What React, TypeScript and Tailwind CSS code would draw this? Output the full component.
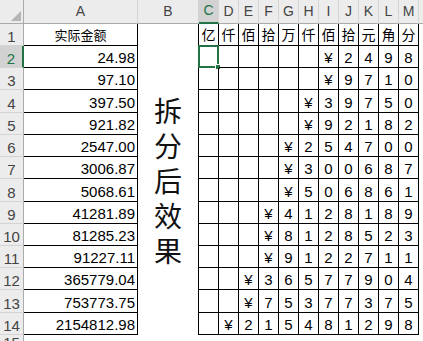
import React from "react";

const amounts = [
  "24.98",
  "97.10",
  "397.50",
  "921.82",
  "2547.00",
  "3006.87",
  "5068.61",
  "41281.89",
  "81285.23",
  "91227.11",
  "365779.04",
  "753773.75",
  "2154812.98",
];

const units = ["亿", "仟", "佰", "拾", "万", "仟", "佰", "拾", "元", "角", "分"];
const letters = ["C", "D", "E", "F", "G", "H", "I", "J", "K", "L", "M"];

const num = "font-['Liberation_Sans_Narrow','Liberation_Sans',sans-serif]";
const cjk = "font-['Noto_Sans_CJK_SC','Noto_Sans',sans-serif]";

// spread an amount over the 11 unit columns, yen sign in front
function splitAmount(v: string) {
  const digits = v.replace(".", "").split("");
  const cells: string[] = Array(11).fill("");
  const start = 11 - digits.length;
  digits.forEach((d, i) => (cells[start + i] = d));
  if (start > 0) cells[start - 1] = "¥";
  return cells;
}

function ColHeader({ label, active }: { label: string; active?: boolean }) {
  return (
    <div
      className={`flex items-end justify-center pb-[1px] text-[14px] ${num} border-r border-r-[#d4d4d4] ${
        active
          ? "bg-[#d2d2d2] text-[#217346] border-b-2 border-b-[#217346]"
          : "bg-[#ececec] text-[#444] border-b border-b-[#ababab]"
      }`}
    >
      {label}
    </div>
  );
}

function RowHeader({ n, active }: { n: number; active?: boolean }) {
  return (
    <div
      className={`flex items-end justify-center pb-[1px] text-[15px] leading-none ${num} border-b border-b-[#d4d4d4] ${
        active
          ? "bg-[#d2d2d2] text-[#217346] border-r-2 border-r-[#217346]"
          : "bg-[#ececec] text-[#444] border-r border-r-[#ababab]"
      }`}
    >
      {n}
    </div>
  );
}

export default function App() {
  return (
    <div className="w-[423px] h-[341px] overflow-hidden bg-white grid grid-cols-[24px_114px_61px_repeat(11,20px)_1fr] grid-rows-[24px_22px_22px_22px_23px_22px_22px_22px_23px_22px_22px_22px_22px_23px_22px_1fr] text-black">
      {/* column headers */}
      <div className="relative bg-[#ececec] border-r border-b border-[#ababab]">
        <div className="absolute right-[2px] bottom-[2px] w-0 h-0 border-l-[10px] border-l-transparent border-b-[10px] border-b-[#b4b4b4]" />
      </div>
      <ColHeader label="A" />
      <ColHeader label="B" />
      {letters.map((l) => (
        <ColHeader key={l} label={l} active={l === "C"} />
      ))}
      <div className="bg-[#ececec] border-b border-b-[#ababab]" />

      {/* row 1 */}
      <RowHeader n={1} />
      <div className={`flex items-center justify-center text-[13px] ${cjk} border-r border-b border-black`}>
        实际金额
      </div>
      <div className="border-r border-black" />
      {units.map((u, i) => (
        <div
          key={i}
          className={`flex items-center justify-center text-[14px] ${cjk} border-r border-b border-black`}
        >
          {u}
        </div>
      ))}
      <div />

      {amounts.map((v, r) => {
        const cells = splitAmount(v);
        return (
          <React.Fragment key={v}>
            <RowHeader n={r + 2} active={r === 0} />
            <div
              className={`flex items-end justify-end pr-[2px] pb-[2px] text-[15px] leading-none ${num} border-r border-b border-black`}
            >
              {v}
            </div>
            {r === 0 && (
              <div className="row-span-13 flex flex-col items-center justify-center pb-[20px] border-r border-black">
                {"拆分后效果".split("").map((c) => (
                  <span key={c} className={`text-[28px] leading-[35px] ${cjk} text-[#111]`}>
                    {c}
                  </span>
                ))}
              </div>
            )}
            {cells.map((c, i) => (
              <div
                key={i}
                className={`relative flex items-end justify-center pb-[2px] text-[15px] leading-none ${num} border-r border-b border-black`}
              >
                {c}
                {r === 0 && i === 0 && (
                  <div className="absolute -left-[1px] -top-[1px] w-[21px] h-[23px] border-2 border-[#217346]">
                    <div className="absolute -right-[4px] -bottom-[4px] w-[6px] h-[6px] bg-[#217346] border border-white" />
                  </div>
                )}
              </div>
            ))}
            <div />
          </React.Fragment>
        );
      })}

      {/* row 15, cut off */}
      <div className="bg-[#ececec] border-r border-r-[#ababab] flex items-end justify-center text-[15px] text-[#444] leading-none">
        <span className={num}>15</span>
      </div>
    </div>
  );
}
